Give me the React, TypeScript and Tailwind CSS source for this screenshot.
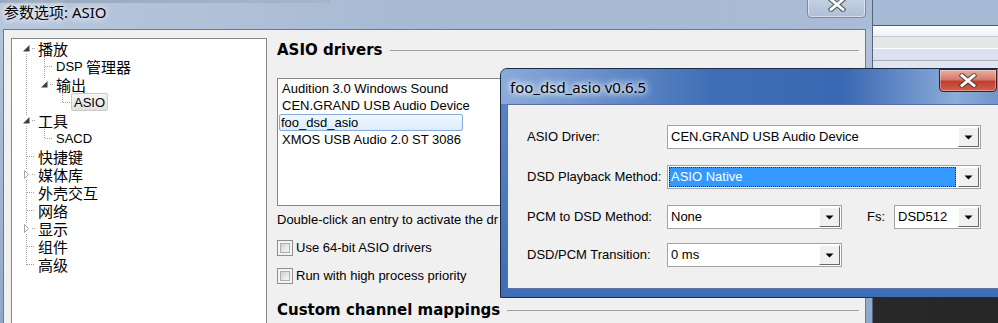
import React from "react";

const SANS = "font-['Liberation_Sans','Noto_Sans_CJK_SC',sans-serif]";
const CJK = "font-['Noto_Sans_CJK_SC',sans-serif]";
const HEAD = "font-['DejaVu_Sans',sans-serif] font-bold";
const UI = "font-['Noto_Sans','Noto_Sans_CJK_SC',sans-serif]";

type Part = { t: string; cjk: boolean };
type Row = { pl: string; parts: Part[]; sel?: boolean };

const rows: Row[] = [
  { pl: "pl-[26px]", parts: [{ t: "播放", cjk: true }] },
  { pl: "pl-[44px]", parts: [{ t: "DSP ", cjk: false }, { t: "管理器", cjk: true }] },
  { pl: "pl-[44px]", parts: [{ t: "输出", cjk: true }] },
  { pl: "pl-[59px]", parts: [{ t: "ASIO", cjk: false }], sel: true },
  { pl: "pl-[26px]", parts: [{ t: "工具", cjk: true }] },
  { pl: "pl-[44px]", parts: [{ t: "SACD", cjk: false }] },
  { pl: "pl-[26px]", parts: [{ t: "快捷键", cjk: true }] },
  { pl: "pl-[26px]", parts: [{ t: "媒体库", cjk: true }] },
  { pl: "pl-[26px]", parts: [{ t: "外壳交互", cjk: true }] },
  { pl: "pl-[26px]", parts: [{ t: "网络", cjk: true }] },
  { pl: "pl-[26px]", parts: [{ t: "显示", cjk: true }] },
  { pl: "pl-[26px]", parts: [{ t: "组件", cjk: true }] },
  { pl: "pl-[26px]", parts: [{ t: "高级", cjk: true }] },
];

const cy = (r: number) => 9 + 18 * r;

function TreeLines() {
  const dot = { stroke: "#a0a0a0", strokeWidth: 1, strokeDasharray: "1 1" };
  const stubRows0 = [6, 8, 9, 11, 12];
  const expRows0 = [0, 4, 7, 10];
  const expanded = [
    { cx: 14, r: 0 },
    { cx: 32, r: 2 },
    { cx: 14, r: 4 },
  ];
  const collapsed = [7, 10];
  return (
    <svg className="absolute left-0 top-0" width="254" height="260">
      <line x1="14.5" y1="13" x2="14.5" y2="226" {...dot} />
      {stubRows0.map((r) => (
        <line key={"s" + r} x1="15" y1={cy(r) + 0.5} x2="23" y2={cy(r) + 0.5} {...dot} />
      ))}
      {expRows0.map((r) => (
        <line key={"d" + r} x1="20" y1={cy(r) + 0.5} x2="23" y2={cy(r) + 0.5} {...dot} />
      ))}
      <line x1="32.5" y1="18" x2="32.5" y2="40" {...dot} />
      <line x1="33" y1={cy(1) + 0.5} x2="41" y2={cy(1) + 0.5} {...dot} />
      <line x1="38" y1={cy(2) + 0.5} x2="41" y2={cy(2) + 0.5} {...dot} />
      <line x1="50.5" y1="48" x2="50.5" y2={cy(3)} {...dot} />
      <line x1="51" y1={cy(3) + 0.5} x2="58" y2={cy(3) + 0.5} {...dot} />
      <line x1="32.5" y1="84" x2="32.5" y2={cy(5)} {...dot} />
      <line x1="33" y1={cy(5) + 0.5} x2="41" y2={cy(5) + 0.5} {...dot} />
      {expanded.map(({ cx, r }) => (
        <g key={"e" + r}>
          <rect x={cx - 4} y={cy(r) - 5} width="9" height="10" fill="#fff" />
          <path
            d={`M${cx + 3.5} ${cy(r) - 3} L${cx + 3.5} ${cy(r) + 3.5} L${cx - 3} ${cy(r) + 3.5} Z`}
            fill="#404040"
          />
        </g>
      ))}
      {collapsed.map((r) => (
        <g key={"c" + r}>
          <rect x="10" y={cy(r) - 5} width="9" height="11" fill="#fff" />
          <path
            d={`M12.5 ${cy(r) - 3.5} L16.5 ${cy(r) + 0.5} L12.5 ${cy(r) + 4.5} Z`}
            fill="#fff"
            stroke="#a6a6a6"
            strokeWidth="1"
          />
        </g>
      ))}
    </svg>
  );
}

function Tree() {
  return (
    <div className="relative w-[256px] h-[300px] shrink-0 border border-[#828790] bg-white">
      <TreeLines />
      <div className="relative flex flex-col">
        {rows.map((row, i) => (
          <div key={i} className={`${row.pl} h-[18px] flex items-center`}>
            <div
              className={
                row.sel
                  ? "flex items-center h-[18px] px-[2px] border border-[#c9c9c9] rounded-[2px] bg-gradient-to-b from-[#f6f6f6] to-[#e2e2e2]"
                  : "flex items-center h-[18px]"
              }
            >
              {row.parts.map((p, j) => (
                <span
                  key={j}
                  className={
                    p.cjk
                      ? `${CJK} block h-[17px] text-[15px] leading-[17px] text-black`
                      : `${SANS} block h-[17px] text-[13px] leading-[17px] text-black whitespace-pre`
                  }
                >
                  {p.t}
                </span>
              ))}
            </div>
          </div>
        ))}
      </div>
    </div>
  );
}

function Checkbox({ label }: { label: string }) {
  return (
    <div className="flex items-center h-[16px]">
      <div className="w-[16px] h-[16px] border border-[#8e8f8f] bg-[#f4f4f4] p-[2px]">
        <div className="w-full h-full border border-[#adadad] bg-gradient-to-br from-[#d2d2d2] to-[#f9f9f9]" />
      </div>
      <span className={`${SANS} ml-[3px] text-[13px] leading-[16px] text-black`}>{label}</span>
    </div>
  );
}

function Heading({ text }: { text: string }) {
  return (
    <div className="h-[24px] flex items-center">
      <span className={`${HEAD} text-[15px] leading-[24px] text-black whitespace-nowrap`}>{text}</span>
      <div className="flex-1 ml-[7px] mt-px h-px bg-[#a0a0a0]" />
    </div>
  );
}

function RightPanel() {
  const items = [
    "Audition 3.0 Windows Sound",
    "CEN.GRAND USB Audio Device",
    "foo_dsd_asio",
    "XMOS USB Audio 2.0 ST 3086",
  ];
  return (
    <div className="w-[582px] shrink-0 flex flex-col">
      <Heading text="ASIO drivers" />
      <div className="mt-[16px] h-[128px] border border-[#828790] bg-white pt-px px-px flex flex-col">
        {items.map((it, i) => (
          <div
            key={i}
            className={
              i === 2
                ? `${SANS} h-[17px] w-[184px] flex items-center pl-[1px] text-[13px] text-black border border-[#84acdd] rounded-[2px] bg-gradient-to-b from-[#f1f7fe] to-[#dcebfc]`
                : `${SANS} h-[17px] flex items-center pl-[3px] text-[13px] text-black`
            }
          >
            {it}
          </div>
        ))}
      </div>
      <div className={`${SANS} mt-[6px] w-[222px] overflow-hidden h-[16px] leading-[16px] text-[13px] text-black whitespace-nowrap`}>
        Double-click an entry to activate the dr
      </div>
      <div className="mt-[12px]">
        <Checkbox label="Use 64-bit ASIO drivers" />
      </div>
      <div className="mt-[12px]">
        <Checkbox label="Run with high process priority" />
      </div>
      <div className="mt-[14px]">
        <Heading text="Custom channel mappings" />
      </div>
    </div>
  );
}

function XGlyph() {
  return (
    <svg width="18" height="15" viewBox="0 0 18 15">
      <path d="M3 2.5 L15 12.5 M15 2.5 L3 12.5" stroke="#3b3b3b" strokeWidth="5" strokeLinecap="square" opacity="0.75" />
      <path d="M3 2.5 L15 12.5 M15 2.5 L3 12.5" stroke="#ffffff" strokeWidth="2.8" strokeLinecap="square" />
    </svg>
  );
}

function MainWindow() {
  return (
    <div className="absolute left-0 top-0 w-[873px] h-[340px] flex flex-col bg-gradient-to-b from-[#b6c6dc] to-[#8ea7c7] border-r border-[#56667d]">
      <div className="relative h-[29px] shrink-0 bg-gradient-to-r from-[#b8c7dc] via-[#a7b9d3] to-[#aabcd5]">
        <div className="absolute left-0 top-0 w-[330px] h-[3px] bg-gradient-to-r from-[#97a7bd] to-[#a5b6cd]" />
        <div
          className={`${UI} relative pl-[4px] text-[15px] leading-[25px] text-black [text-shadow:0_0_8px_#ffffff,0_0_6px_#ffffff]`}
        >
          参数选项: ASIO
        </div>
        <div className="absolute left-[807px] top-[-4px] w-[59px] h-[22px] rounded-b-[4px] border border-[#7d8ca2] bg-gradient-to-b from-[#c7d3e3] to-[#aebfd6] shadow-[inset_0_0_0_1px_rgba(255,255,255,0.45)] flex items-center justify-center">
          <div className="mt-[-5px]">
            <XGlyph />
          </div>
        </div>
      </div>
      <div className="flex flex-1 min-h-0">
        <div className="w-[3px] shrink-0" />
        <div className="w-[863px] shrink-0 border-l border-t border-r border-[#6b7a8f] bg-[#f0f0f0] pl-[7px] pt-[8px] flex gap-[10px] overflow-hidden">
          <Tree />
          <RightPanel />
        </div>
      </div>
    </div>
  );
}

function BackWindow() {
  return (
    <div className="absolute left-[873px] top-0 w-[125px] h-[297px] flex flex-col">
      <div className="h-[25px] bg-[#a7bad5]" />
      <div className="h-px bg-[#4e5d74]" />
      <div className="h-[10px] bg-gradient-to-b from-white to-[#eef1f6]" />
      <div className="h-px bg-[#c2c8d1]" />
      <div className="h-[11px] bg-[#e4e8e5]" />
      <div className="h-px bg-white" />
      <div className="h-[11px] bg-[#dce0f1]" />
      <div className="h-px bg-[#a9aebb]" />
      <div className="flex-1 bg-[#e2e5f0]" />
    </div>
  );
}

function Arrow() {
  return (
    <svg width="9" height="5" viewBox="0 0 9 5">
      <path d="M0.5 0.5 H8.5 L4.5 4.5 Z" fill="#000" />
    </svg>
  );
}

function Combo({ w, value, selected }: { w: string; value: string; selected?: boolean }) {
  return (
    <div className={`${w} h-[24px] shrink-0 flex border border-[#a3a3a3] bg-white p-px`}>
      {selected ? (
        <div className="flex-1 mr-[2px] flex items-center bg-[#3399ff] border border-dotted border-[#222] pl-[1px] text-white text-[13px]">
          {value}
        </div>
      ) : (
        <div className="flex-1 flex items-center pl-[2px] text-black text-[13px]">{value}</div>
      )}
      <div className="w-[21px] h-full flex items-center justify-center bg-[#f0f0f0] border border-t-white border-l-white border-r-[#696969] border-b-[#696969]">
        <Arrow />
      </div>
    </div>
  );
}

function Dialog() {
  return (
    <div className="absolute left-[500px] top-[68px] w-[506px] h-[230px] rounded-t-[7px] border border-[#1c2c44] bg-[linear-gradient(180deg,#5f86c4_0%,#3e6db6_100%)] flex flex-col overflow-hidden">
      <div className="relative h-[35px] shrink-0 bg-[linear-gradient(90deg,#8aaada_0%,#6b91cc_18%,#3f6eb6_42%,#3a68b2_68%,#6d93cc_82%,#8cacd9_90%,#6d90c8_100%)]">
        <div
          className={`${UI} pl-[9px] text-[15px] leading-[36px] text-black [text-shadow:0_0_10px_#ffffff,0_0_8px_#ffffff,0_0_4px_#ffffff]`}
        >
          foo_dsd_asio v0.6.5
        </div>
        <div className="absolute right-[8px] top-0 w-[58px] h-[23px] rounded-b-[4px] border border-[#4a1a16] bg-[linear-gradient(180deg,#e8b0a6_0%,#d77a6a_45%,#c23e2f_55%,#d2604c_100%)] shadow-[inset_0_0_0_1px_rgba(255,255,255,0.35)] flex items-center justify-center">
          <XGlyph />
        </div>
      </div>
      <div className="flex-1 px-[6px] pb-[8px] flex">
        <div className={`${SANS} flex-1 border border-[#5a73a2] bg-[#f0f0f0] pt-[20px] pl-[19px] flex flex-col`}>
          <div className="h-[24px] flex items-center">
            <div className="w-[140px] text-[13px] text-black">ASIO Driver:</div>
            <Combo w="w-[314px]" value="CEN.GRAND USB Audio Device" />
          </div>
          <div className="mt-[16px] h-[24px] flex items-center">
            <div className="w-[140px] text-[13px] text-black whitespace-nowrap">DSD Playback Method:</div>
            <Combo w="w-[314px]" value="ASIO Native" selected />
          </div>
          <div className="mt-[16px] h-[24px] flex items-center">
            <div className="w-[140px] text-[13px] text-black">PCM to DSD Method:</div>
            <Combo w="w-[175px]" value="None" />
            <div className="ml-[25px] w-[27px] text-[13px] text-black">Fs:</div>
            <Combo w="w-[87px]" value="DSD512" />
          </div>
          <div className="mt-[14px] h-[24px] flex items-center">
            <div className="w-[140px] text-[13px] text-black">DSD/PCM Transition:</div>
            <Combo w="w-[175px]" value="0 ms" />
          </div>
        </div>
      </div>
    </div>
  );
}

export default function App() {
  return (
    <div className="relative w-[998px] h-[323px] overflow-hidden bg-gradient-to-r from-[#3a3a3a] to-[#262626]">
      <BackWindow />
      <MainWindow />
      <Dialog />
    </div>
  );
}
